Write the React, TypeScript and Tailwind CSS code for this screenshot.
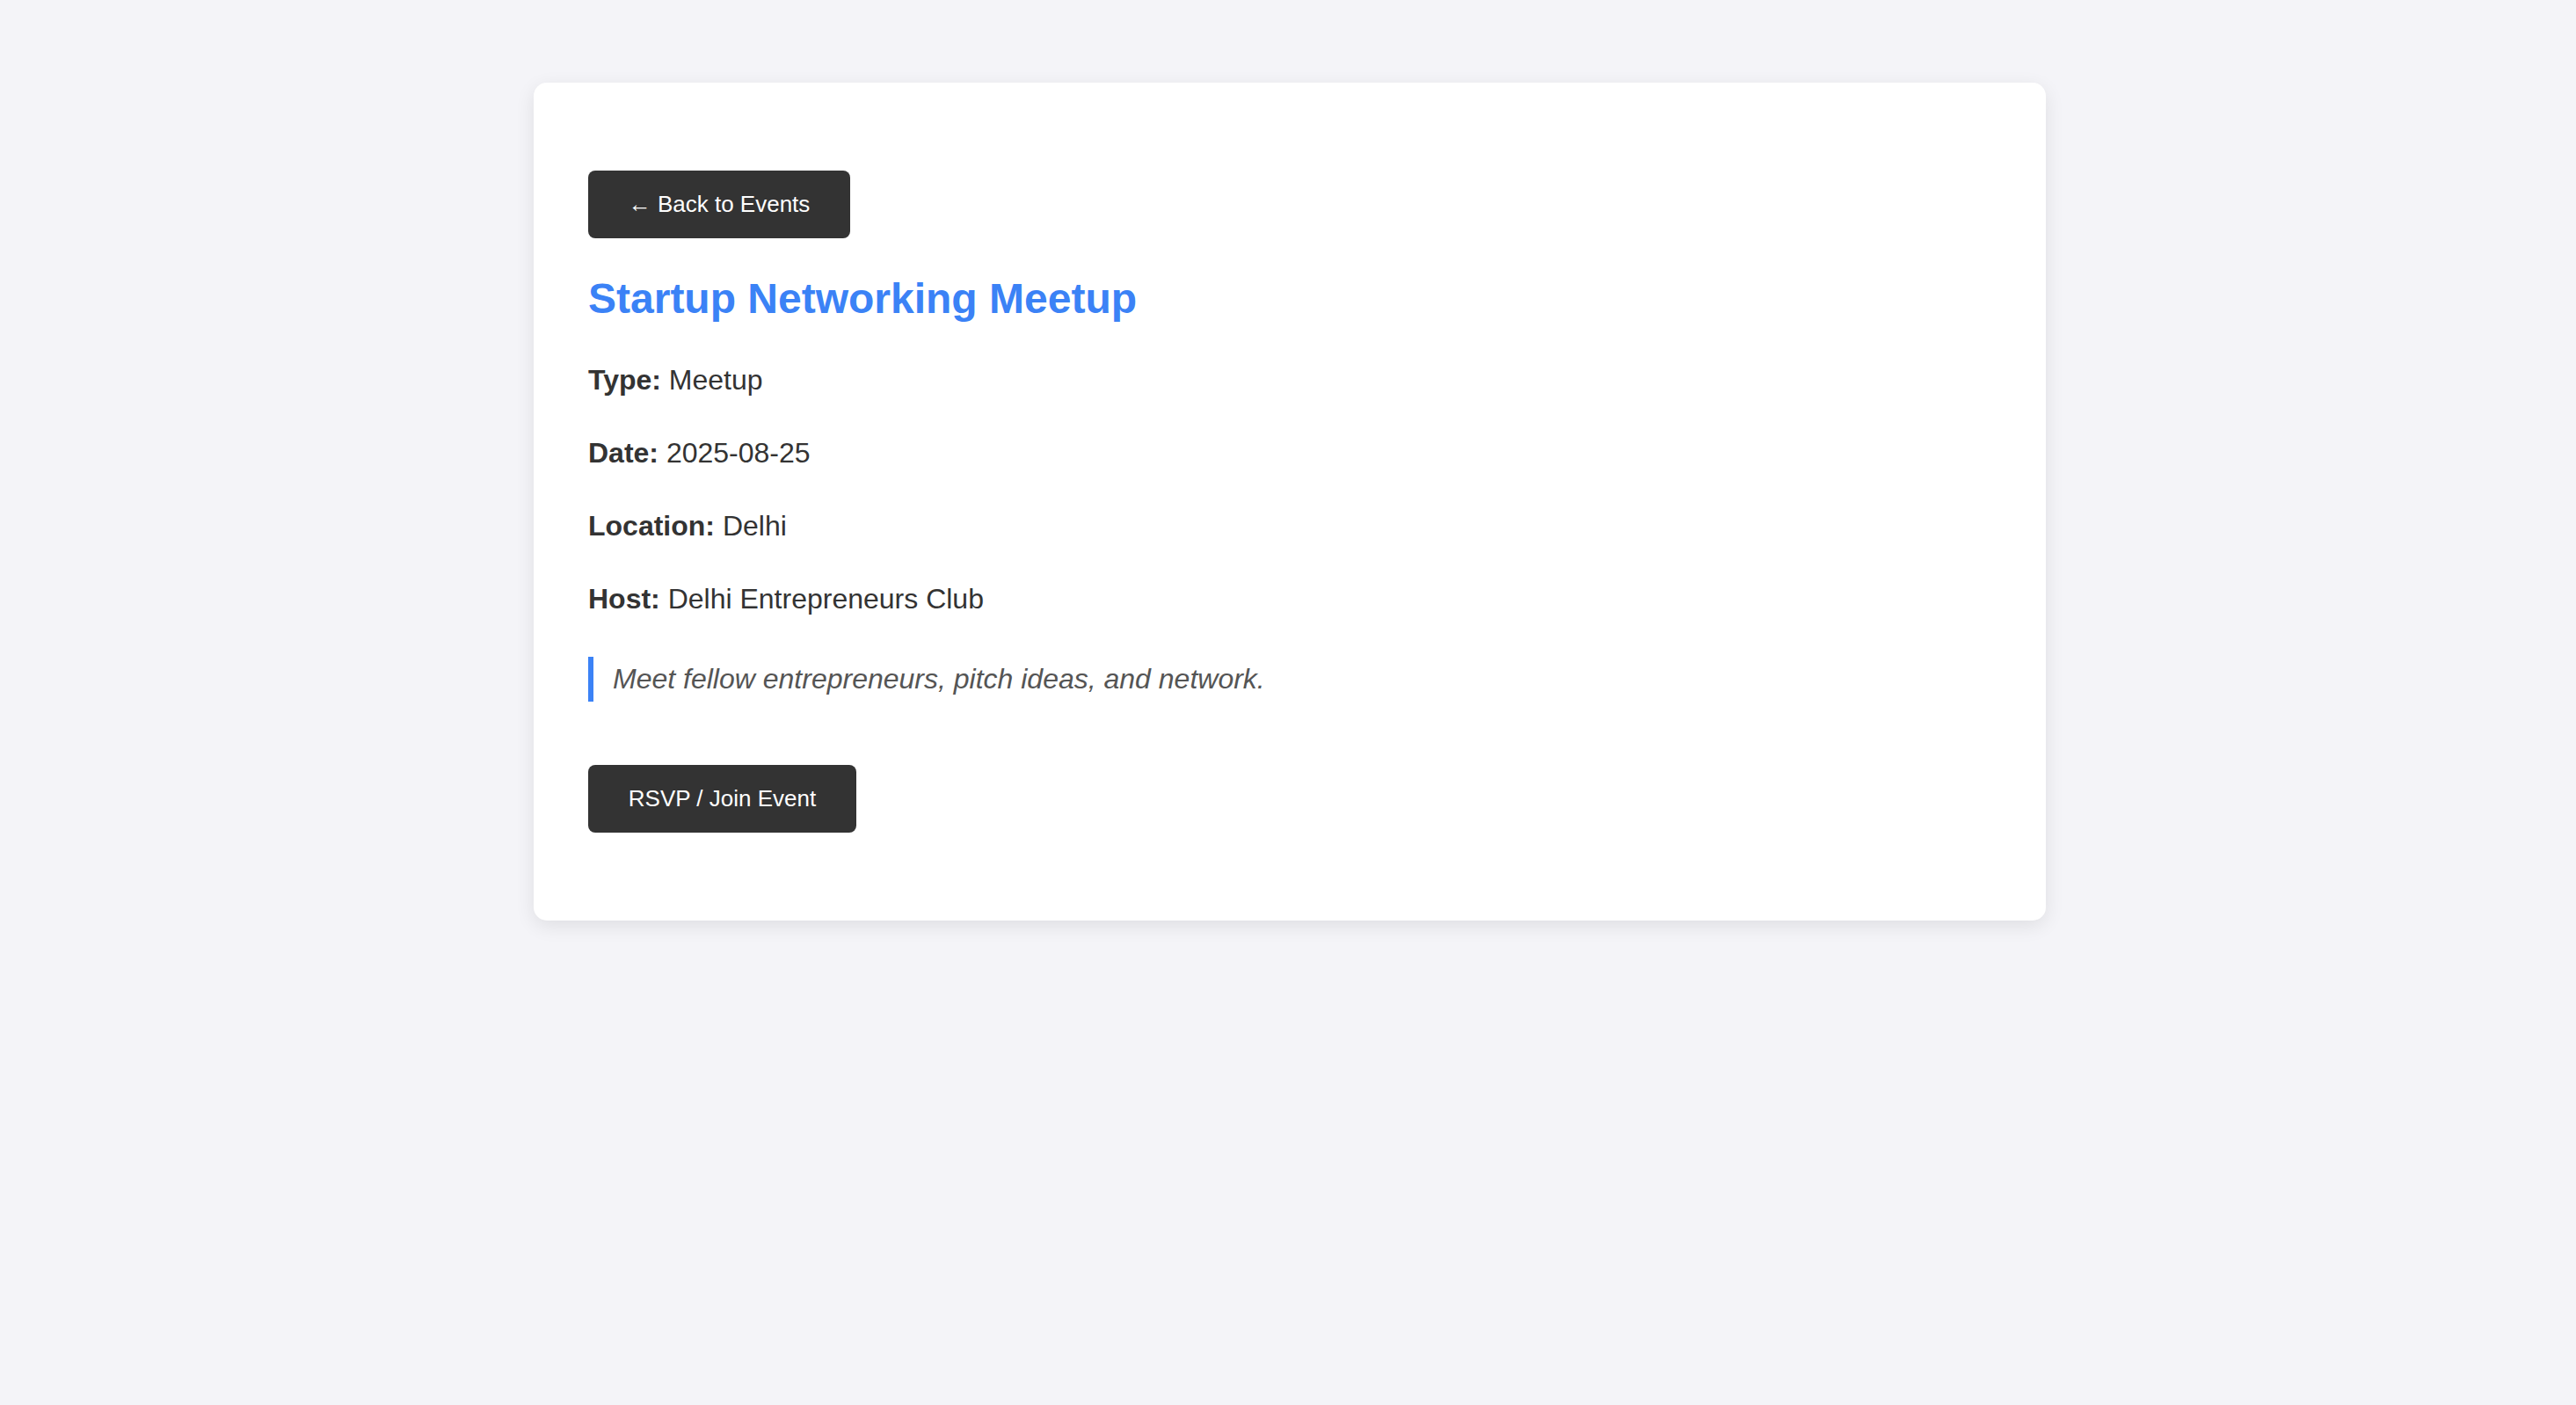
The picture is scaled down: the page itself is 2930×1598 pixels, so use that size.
const details = [
  { label: 'Type:', value: 'Meetup' },
  { label: 'Date:', value: '2025-08-25' },
  { label: 'Location:', value: 'Delhi' },
  { label: 'Host:', value: 'Delhi Entrepreneurs Club' },
];

export default function App() {
  return (
    <div
      className="min-h-screen bg-[#f4f4f8] pt-[94px] text-[#333]"
      style={{ fontFamily: '"Liberation Sans", Arial, Helvetica, sans-serif' }}
    >
      <div className="ml-[607px] w-[1720px] rounded-[15px] bg-white px-[62px] pt-[100px] pb-[100px] shadow-[0_6px_22px_rgba(0,0,0,0.09)]">
        <button className="flex h-[77px] w-[298px] items-center justify-center rounded-[8px] bg-[#333] text-[26px] text-white">
          ← Back to Events
        </button>

        <h1 className="mt-[41px] text-[48px] leading-[56px] font-bold text-[#3b82f6]">
          Startup Networking Meetup
        </h1>

        <div className="mt-[44px] flex flex-col gap-[43px]">
          {details.map((d) => (
            <p key={d.label} className="text-[32px] leading-[40px]">
              <span className="font-bold">{d.label}</span> {d.value}
            </p>
          ))}
        </div>

        <blockquote className="mt-[46px] border-l-[6px] border-[#3b82f6] py-[7px] pl-[22px] text-[32px] leading-[37px] text-[#555] italic">
          Meet fellow entrepreneurs, pitch ideas, and network.
        </blockquote>

        <button className="mt-[72px] flex h-[77px] w-[305px] items-center justify-center rounded-[8px] bg-[#333] text-[26px] text-white">
          RSVP / Join Event
        </button>
      </div>
    </div>
  );
}
